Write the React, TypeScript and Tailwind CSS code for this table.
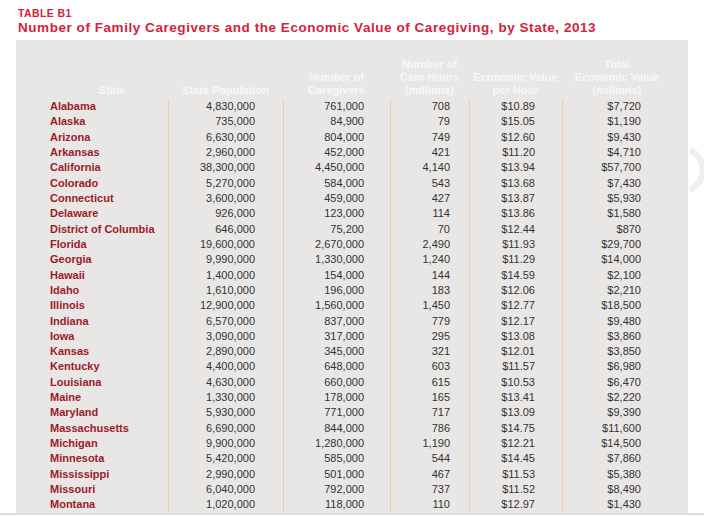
const ROWS: [string, string, string, string, string, string][] = [
  ["Alabama", "4,830,000", "761,000", "708", "$10.89", "$7,720"],
  ["Alaska", "735,000", "84,900", "79", "$15.05", "$1,190"],
  ["Arizona", "6,630,000", "804,000", "749", "$12.60", "$9,430"],
  ["Arkansas", "2,960,000", "452,000", "421", "$11.20", "$4,710"],
  ["California", "38,300,000", "4,450,000", "4,140", "$13.94", "$57,700"],
  ["Colorado", "5,270,000", "584,000", "543", "$13.68", "$7,430"],
  ["Connecticut", "3,600,000", "459,000", "427", "$13.87", "$5,930"],
  ["Delaware", "926,000", "123,000", "114", "$13.86", "$1,580"],
  ["District of Columbia", "646,000", "75,200", "70", "$12.44", "$870"],
  ["Florida", "19,600,000", "2,670,000", "2,490", "$11.93", "$29,700"],
  ["Georgia", "9,990,000", "1,330,000", "1,240", "$11.29", "$14,000"],
  ["Hawaii", "1,400,000", "154,000", "144", "$14.59", "$2,100"],
  ["Idaho", "1,610,000", "196,000", "183", "$12.06", "$2,210"],
  ["Illinois", "12,900,000", "1,560,000", "1,450", "$12.77", "$18,500"],
  ["Indiana", "6,570,000", "837,000", "779", "$12.17", "$9,480"],
  ["Iowa", "3,090,000", "317,000", "295", "$13.08", "$3,860"],
  ["Kansas", "2,890,000", "345,000", "321", "$12.01", "$3,850"],
  ["Kentucky", "4,400,000", "648,000", "603", "$11.57", "$6,980"],
  ["Louisiana", "4,630,000", "660,000", "615", "$10.53", "$6,470"],
  ["Maine", "1,330,000", "178,000", "165", "$13.41", "$2,220"],
  ["Maryland", "5,930,000", "771,000", "717", "$13.09", "$9,390"],
  ["Massachusetts", "6,690,000", "844,000", "786", "$14.75", "$11,600"],
  ["Michigan", "9,900,000", "1,280,000", "1,190", "$12.21", "$14,500"],
  ["Minnesota", "5,420,000", "585,000", "544", "$14.45", "$7,860"],
  ["Mississippi", "2,990,000", "501,000", "467", "$11.53", "$5,380"],
  ["Missouri", "6,040,000", "792,000", "737", "$11.52", "$8,490"],
  ["Montana", "1,020,000", "118,000", "110", "$12.97", "$1,430"],
];

const cell = "flex items-center justify-end border-l border-[#f1cda6]";

export default function App() {
  return (
    <div className="relative h-[516px] w-[704px] overflow-hidden bg-white font-['Liberation_Sans',Arial,sans-serif]">
      <div className="px-[18px] pt-[7px] text-[#d3223b]">
        <div className="text-[10.5px] font-bold leading-[12px] tracking-[0.4px]">TABLE B1</div>
        <h1 className="text-[13.5px] font-bold leading-[17px] tracking-[0.55px]">
          Number of Family Caregivers and the Economic Value of Caregiving, by State, 2013
        </h1>
      </div>

      <div className="ml-[16px] mt-[4px] h-[473px] w-[672px] bg-[#e8e7e5]">
        <div className="grid h-[59px] grid-cols-[152px_115px_107px_79px_93px_110px] items-end pb-[2px] text-center text-[11px] font-bold leading-[13px] text-[#f8f7f5]">
          <div className="pl-[40px]">State</div>
          <div>State Population</div>
          <div>
            Number of
            <br />
            Caregivers
          </div>
          <div>
            Number of
            <br />
            Care Hours
            <br />
            (millions)
          </div>
          <div>
            Economic Value
            <br />
            per Hour
          </div>
          <div>
            Total
            <br />
            Economic Value
            <br />
            (millions)
          </div>
        </div>

        <div className="text-[11px] leading-none">
          {ROWS.map((r) => (
            <div key={r[0]} className="grid h-[15.32px] grid-cols-[152px_115px_107px_79px_93px_110px]">
              <div className="flex items-center pl-[34px] font-bold text-[#9c1a2b]">{r[0]}</div>
              <div className={`${cell} pr-[28px] text-[#333]`}>{r[1]}</div>
              <div className={`${cell} pr-[26px] text-[#333]`}>{r[2]}</div>
              <div className={`${cell} pr-[19px] text-[#333]`}>{r[3]}</div>
              <div className={`${cell} pr-[27px] text-[#333]`}>{r[4]}</div>
              <div className={`${cell} pr-[31px] text-[#333]`}>{r[5]}</div>
            </div>
          ))}
        </div>
      </div>

      <div className="h-[2px] w-full bg-[#dcdcdc]" />

      {/* faint scroll hint on the right edge */}
      <svg className="absolute left-[684px] top-[140px]" width="20" height="60" viewBox="0 0 20 60">
        <path d="M6 10 A22 22 0 0 1 6 50" fill="none" stroke="#efefef" strokeWidth="6" />
      </svg>
    </div>
  );
}
